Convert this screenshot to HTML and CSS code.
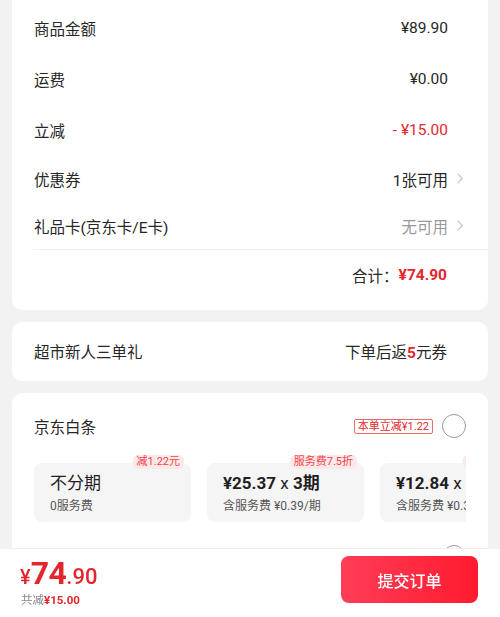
FILE: index.html
```html
<!DOCTYPE html>
<html lang="zh-CN">
<head>
<meta charset="utf-8">
<title>确认订单</title>
<link rel="stylesheet" href="styles.css">
</head>
<body>
<div class="page">
  <section class="card summary">
    <div class="row r-tall"><span class="label">商品金额</span><span class="value">¥89.90</span><span class="slot"></span></div>
    <div class="row r-tall"><span class="label">运费</span><span class="value">¥0.00</span><span class="slot"></span></div>
    <div class="row r-tall"><span class="label">立减</span><span class="value red">-&nbsp;¥15.00</span><span class="slot"></span></div>
    <div class="row r-short"><span class="label">优惠券</span><span class="value">1张可用</span><span class="slot"><svg class="chev" width="6" height="11" viewBox="0 0 6 11"><polyline points="0.7,0.7 5.2,5.5 0.7,10.3" fill="none" stroke="#c4c4c4" stroke-width="1.2"/></svg></span></div>
    <div class="row r-short"><span class="label">礼品卡(京东卡/E卡)</span><span class="value muted">无可用</span><span class="slot"><svg class="chev" width="6" height="11" viewBox="0 0 6 11"><polyline points="0.7,0.7 5.2,5.5 0.7,10.3" fill="none" stroke="#c4c4c4" stroke-width="1.2"/></svg></span></div>
    <div class="total"><span class="total-label">合计：</span><span class="total-amt">¥74.90</span></div>
  </section>

  <section class="card promo">
    <span class="label">超市新人三单礼</span>
    <span class="promo-value">下单后返<b class="five">5</b>元券</span>
  </section>

  <section class="card pay">
    <div class="pay-head">
      <span class="label">京东白条</span>
      <span class="pay-right"><span class="tag">本单立减¥1.22</span><span class="radio"></span></span>
    </div>
    <div class="plans">
      <div class="plan">
        <span class="ptag">减1.22元</span>
        <div class="p-title">不分期</div>
        <div class="p-sub">0服务费</div>
      </div>
      <div class="plan">
        <span class="ptag">服务费7.5折</span>
        <div class="p-title num">¥25.37 <span class="x">x</span> 3期</div>
        <div class="p-sub">含服务费 ¥0.39/期</div>
      </div>
      <div class="plan">
        <span class="ptag">服务费7.5折</span>
        <div class="p-title num">¥12.84 <span class="x">x</span> 6期</div>
        <div class="p-sub">含服务费 ¥0.32/期</div>
      </div>
    </div>
    <div class="pay-next">
      <span class="radio"></span>
    </div>
  </section>
</div>

<footer class="bar">
  <div class="bar-left">
    <div class="price"><span class="yen">¥</span><span class="int">74</span><span class="dec">.90</span></div>
    <div class="saved">共减<b>¥15.00</b></div>
  </div>
  <button class="submit">提交订单</button>
</footer>
</body>
</html>
```

FILE: styles.css
```css
* { box-sizing: border-box; }
html, body { margin: 0; padding: 0; }
body {
  background: #f2f2f2;
  font-family: Roboto, "Noto Sans CJK SC", sans-serif;
  color: #262626;
  width: 500px;
  height: 617px;
  overflow: hidden;
}
.page {
  padding: 0 12px;
  display: flex;
  flex-direction: column;
  gap: 12px;
}
.card {
  background: #fff;
  border-radius: 10px;
}
.label { font-size: 15.5px; color: #262626; }

.summary {
  margin-top: -12px;
  padding-top: 14px;
  padding-bottom: 9px;
}
.row {
  display: flex;
  align-items: center;
  padding: 0 22px;
}
.r-tall { height: 51px; }
.r-short { height: 47px; }
.row .label { flex: 1; }
.value { font-size: 15.5px; color: #262626; }
.value.red { color: #e3262c; }
.value.muted { color: #999; }
.slot {
  width: 18px;
  display: flex;
  justify-content: flex-end;
  padding-right: 3px;
}
.chev { display: block; }
.total {
  margin-left: 22px;
  border-top: 1px solid #f1f1f1;
  height: 52px;
  display: flex;
  align-items: center;
  justify-content: flex-end;
  padding-right: 41px;
  padding-bottom: 2px;
  font-size: 15.5px;
}
.total-label { color: #262626; }
.total-amt { color: #e3262c; font-weight: 700; }

.promo {
  height: 59px;
  display: flex;
  align-items: center;
  justify-content: space-between;
  padding: 0 41px 2px 22px;
}
.promo-value { font-size: 15.5px; color: #262626; }
.five { color: #e3262c; font-weight: 700; }

.pay {
  padding: 0 22px;
}
.pay-head {
  display: flex;
  align-items: center;
  justify-content: space-between;
  padding: 21px 0 13px;
}
.pay-right { display: flex; align-items: center; gap: 9px; }
.tag {
  font-size: 11px;
  line-height: 13px;
  color: #e3262c;
  border: 1px solid #e86a6a;
  border-radius: 2px;
  padding: 0 3px;
}
.radio {
  width: 24px;
  height: 24px;
  border-radius: 50%;
  border: 1.3px solid #9a9a9a;
  display: block;
}
.plans {
  display: flex;
  gap: 16px;
  padding-top: 12px;
  overflow: hidden;
}
.plan {
  position: relative;
  flex: none;
  width: 157px;
  height: 59px;
  background: #f5f5f5;
  border-radius: 8px;
  padding: 9px 16px 0;
}
.ptag {
  position: absolute;
  top: -8px;
  right: 7px;
  height: 14px;
  line-height: 14px;
  font-size: 11px;
  padding: 0 4px;
  border-radius: 5px;
  background: #fde8e8;
  color: #f0444a;
  white-space: nowrap;
}
.p-title {
  font-size: 17px;
  line-height: 22px;
  color: #1f1f1f;
  white-space: nowrap;
}
.p-title.num { font-weight: 700; }
.p-title .x { font-weight: 400; }
.p-sub {
  margin-top: 4px;
  font-size: 12px;
  line-height: 16px;
  color: #555;
  white-space: nowrap;
}
.pay-next {
  display: flex;
  align-items: center;
  justify-content: flex-end;
  padding: 23px 0;
}

.bar {
  position: fixed;
  left: 0;
  right: 0;
  bottom: 0;
  height: 68px;
  background: #fff;
  box-shadow: 0 -1px 0 #efefef;
  display: flex;
  justify-content: space-between;
  align-items: flex-start;
  padding: 7px 22px 0 20px;
}
.bar-left { padding-top: 2px; }
.price {
  color: #e3262c;
  line-height: 30px;
  white-space: nowrap;
}
.yen { font-size: 20px; font-weight: 500; }
.int { font-size: 32px; font-weight: 700; letter-spacing: -0.5px; }
.dec { font-size: 22px; font-weight: 500; }
.saved {
  font-size: 11.5px;
  line-height: 13px;
  color: #888;
  margin-left: 1px;
}
.saved b { color: #e3262c; font-weight: 700; }
.submit {
  width: 137px;
  height: 47px;
  border: 0;
  border-radius: 8px;
  background: linear-gradient(90deg, #ff3d58, #ff1b2f);
  color: #fff;
  font-family: Roboto, "Noto Sans CJK SC", sans-serif;
  font-size: 16px;
  font-weight: 500;
  padding: 0;
}
```
